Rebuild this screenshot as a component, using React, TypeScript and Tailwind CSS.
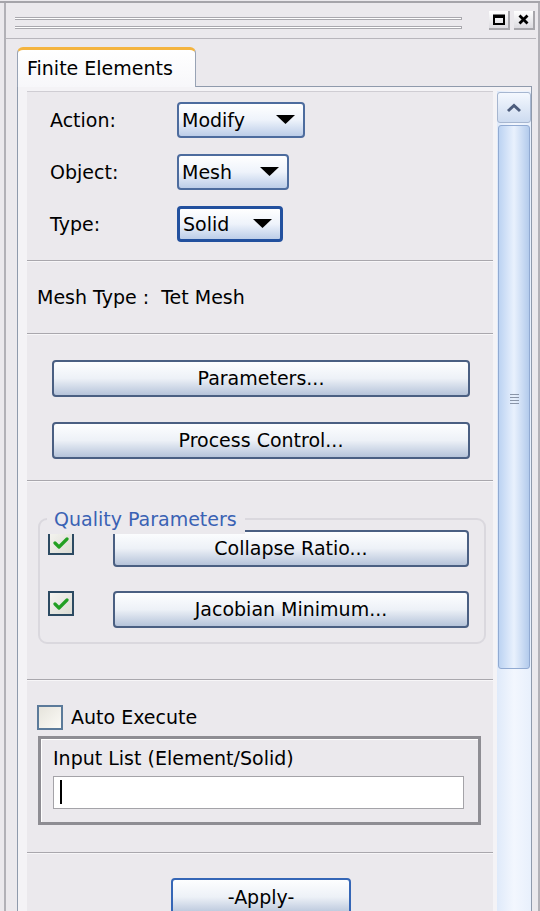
import React from "react";

function Dropdown({ text, className }: { text: string; className: string }) {
  return (
    <div
      className={`flex h-[36px] items-center justify-between rounded-[4px] bg-gradient-to-b from-white via-[#eef3fb] to-[#bccde8] pl-[3px] pr-[8px] ${className}`}
    >
      <span>{text}</span>
      <svg width="19" height="10" viewBox="0 0 19 10">
        <polygon points="0,0 19,0 9.5,9" fill="#000" />
      </svg>
    </div>
  );
}

function BlueButton({ children, className }: { children: React.ReactNode; className: string }) {
  return (
    <div
      className={`flex h-[37px] shrink-0 items-center justify-center rounded-[4px] border-2 border-[#4a5f82] bg-gradient-to-b from-[#fdfeff] via-[#edf1f7] to-[#b6c4da] ${className}`}
    >
      {children}
    </div>
  );
}

function CheckBox({ checked }: { checked: boolean }) {
  return (
    <div
      className={`flex h-[25px] w-[26px] shrink-0 items-center justify-center border-2 ${
        checked
          ? "border-[#2c4a62] bg-gradient-to-br from-[#f4f4f0] to-[#dcdcd4]"
          : "border-[#5b7a9a] bg-gradient-to-br from-[#e6e4dc] to-[#fbfaf6]"
      }`}
    >
      {checked && (
        <svg width="16" height="14" viewBox="0 0 16 14">
          <path d="M2 7 L6 11 L14 3" stroke="#22a022" strokeWidth="3.2" fill="none" strokeLinecap="round" strokeLinejoin="round" />
        </svg>
      )}
    </div>
  );
}

function Divider() {
  return <div className="h-[2px] shrink-0 border-t border-[#a9a7ad] bg-[#f7f6f8]" />;
}

export default function App() {
  return (
    <div className="h-[911px] w-[540px] overflow-hidden bg-[#ebe9ed] pt-px font-['DejaVu_Sans',sans-serif] text-[19px] text-black">
      <div className="h-full border-t-2 border-[#a5a4aa] pl-[4px]">
        <div className="flex h-full flex-col border-l-2 border-r-2 border-[#b2b1b7] bg-[#ebe9ed] pr-[2px]">
          {/* title bar */}
          <div className="flex h-[36px] shrink-0 items-center border-b border-[#b8b6bc] pl-[9px] pr-[1px]">
            <div className="mt-[5px] flex w-[447px] flex-col gap-[6px]">
              <div className="h-[3px] border border-l-0 border-[#a9a8ae] bg-white" />
              <div className="h-[3px] border border-l-0 border-[#a9a8ae] bg-white" />
            </div>
            <div className="ml-auto flex gap-[4px]">
              <div className="flex h-[19px] w-[21px] items-center justify-center border-b-2 border-r-2 border-[#a7a6ab] bg-gradient-to-b from-white to-[#dcdbe0]">
                <svg width="12" height="11" viewBox="0 0 12 11">
                  <rect x="1" y="1.5" width="10" height="8.5" fill="none" stroke="#000" strokeWidth="2" />
                  <rect x="1" y="1" width="10" height="3" fill="#000" />
                </svg>
              </div>
              <div className="flex h-[19px] w-[21px] items-center justify-center border-b-2 border-r-2 border-[#a7a6ab] bg-gradient-to-b from-white to-[#dcdbe0]">
                <svg width="11" height="11" viewBox="0 0 11 11">
                  <path d="M1.5 1.5 L9.5 9.5 M9.5 1.5 L1.5 9.5" stroke="#000" strokeWidth="2.8" />
                </svg>
              </div>
            </div>
          </div>

          {/* tab row */}
          <div className="ml-[11px] flex h-[48px] w-[515px] shrink-0 items-end">
            <div className="flex h-[40px] w-[179px] items-center rounded-t-[6px] border-x border-t-[3px] border-x-[#98a3b5] border-t-[#f4b43f] bg-gradient-to-b from-white to-[#f7f7fa] pl-[9px]">
              Finite Elements
            </div>
            <div className="h-px flex-1 bg-[#8f9aac]" />
          </div>

          {/* tab page */}
          <div className="ml-[11px] flex min-h-0 w-[515px] flex-1 border-x border-[#8f9aac] bg-[#f4f3f6] pl-[9px] pt-[4px]">
            {/* content */}
            <div className="flex w-[466px] shrink-0 flex-col border-t border-[#cfcdd3] bg-[#ebe9ed]">
              <div className="flex h-[168px] shrink-0 flex-col gap-[16px] pl-[23px] pt-[10px]">
                <div className="flex items-center">
                  <span className="w-[127px]">Action:</span>
                  <Dropdown text="Modify" className="w-[128px] border-2 border-[#4d6c9e]" />
                </div>
                <div className="flex items-center">
                  <span className="w-[127px]">Object:</span>
                  <Dropdown text="Mesh" className="w-[112px] border-2 border-[#4d6c9e]" />
                </div>
                <div className="flex items-center">
                  <span className="w-[127px]">Type:</span>
                  <Dropdown text="Solid" className="w-[106px] border-[3px] border-[#22509e]" />
                </div>
              </div>
              <Divider />
              <div className="flex h-[71px] shrink-0 items-center pl-[10px]">Mesh Type :&nbsp; Tet Mesh</div>
              <Divider />
              <div className="flex h-[145px] shrink-0 flex-col gap-[25px] pl-[25px] pt-[25px]">
                <BlueButton className="w-[418px]">Parameters...</BlueButton>
                <BlueButton className="w-[418px]">Process Control...</BlueButton>
              </div>
              <Divider />
              <div className="h-[197px] shrink-0 pl-[11px] pt-[36px]">
                <div className="relative h-[126px] w-[448px] rounded-[9px] border-2 border-[#dad8de] pl-[8px] pt-[10px]">
                  <span className="absolute -top-[15px] left-[7px] bg-[#ebe9ed] pl-[7px] pr-[8px] text-[#3a62b4]">
                    Quality Parameters
                  </span>
                  <div className="flex flex-col gap-[24px]">
                    <div className="flex items-start">
                      <CheckBox checked />
                      <BlueButton className="ml-[39px] w-[356px]">Collapse Ratio...</BlueButton>
                    </div>
                    <div className="flex items-start">
                      <CheckBox checked />
                      <BlueButton className="ml-[39px] w-[356px]">Jacobian Minimum...</BlueButton>
                    </div>
                  </div>
                </div>
              </div>
              <Divider />
              <div className="flex h-[171px] shrink-0 flex-col pl-[10px] pt-[22px]">
                <div className="flex items-center gap-[8px]">
                  <CheckBox checked={false} />
                  <span>Auto Execute</span>
                </div>
                <div className="ml-[1px] mt-[4px] h-[89px] w-[443px] border-[3px] border-[#8e8d93] pl-[12px] pt-[6px] shadow-[inset_1px_1px_0_#ffffff]">
                  <div className="leading-[26px]">Input List (Element/Solid)</div>
                  <div className="mt-[5px] flex h-[33px] w-[411px] items-center border border-[#a4a3a8] bg-white pl-[6px]">
                    <div className="h-[24px] w-[2px] bg-black" />
                  </div>
                </div>
              </div>
              <Divider />
              <div className="shrink-0 pl-[144px] pt-[24px]">
                <BlueButton className="h-[38px] w-[180px] border-[#3566b6]">-Apply-</BlueButton>
              </div>
            </div>

            {/* scrollbar */}
            <div className="ml-[4px] flex w-[34px] shrink-0 flex-col bg-gradient-to-r from-[#dfeafa] via-[#f3f7fe] to-[#e8f0fc] pt-[1px]">
              <div className="flex h-[31px] shrink-0 items-center justify-center rounded-[3px] border border-[#a6b6d0] bg-gradient-to-b from-[#f4f8fe] to-[#cddbf0]">
                <svg width="16" height="10" viewBox="0 0 16 10">
                  <path d="M2 8 L8 2.5 L14 8" stroke="#4c5c7c" strokeWidth="3" fill="none" />
                </svg>
              </div>
              <div className="mx-px mt-[2px] flex h-[544px] shrink-0 items-center justify-center rounded-[3px] border border-[#91aad2] bg-gradient-to-r from-[#bcd3f2] via-[#e9f1fd] to-[#b3cbec]">
                <div className="mt-[4px] flex w-[9px] flex-col gap-[2px]">
                  <div className="h-px bg-[#8a95a8]" />
                  <div className="h-px bg-[#8a95a8]" />
                  <div className="h-px bg-[#8a95a8]" />
                  <div className="h-px bg-[#8a95a8]" />
                </div>
              </div>
            </div>
          </div>
        </div>
      </div>
    </div>
  );
}
